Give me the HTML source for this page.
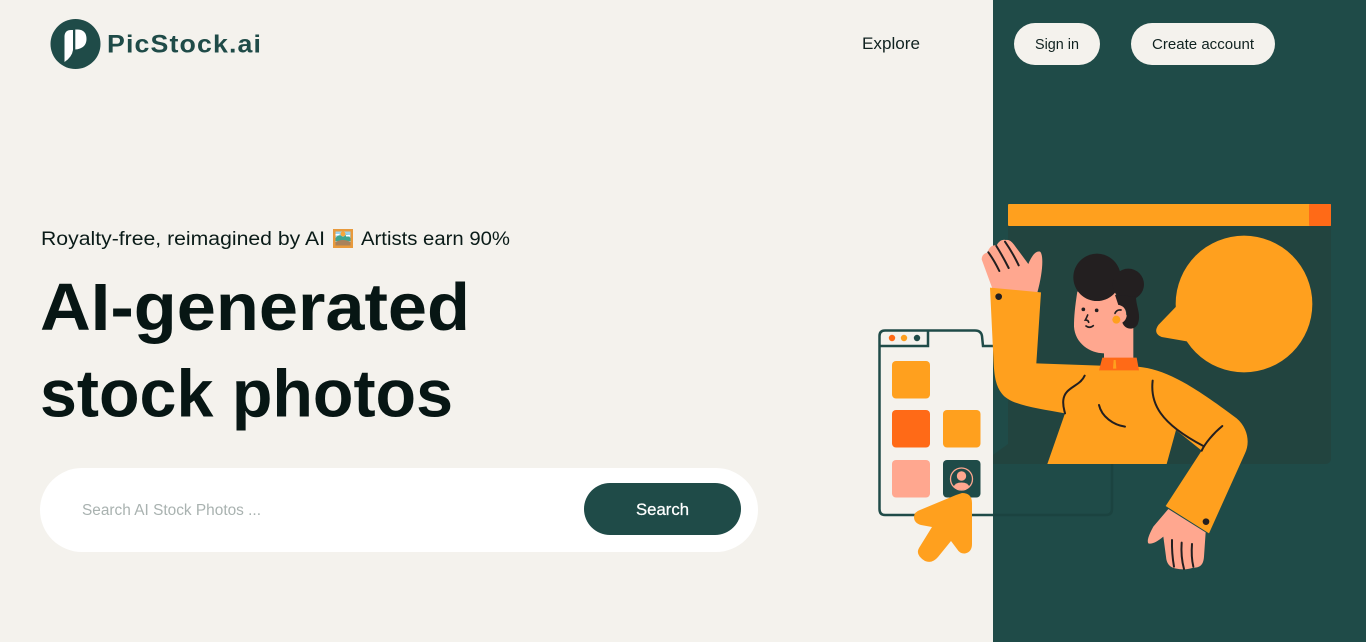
<!DOCTYPE html>
<html lang="en">
<head>
<meta charset="utf-8">
<title>PicStock.ai</title>
<style>
html,body{margin:0;padding:0;width:1366px;height:642px;overflow:hidden;background:#F4F2ED}
svg{display:block}
text{font-family:"Liberation Sans",Arial,sans-serif}
</style>
</head>
<body>
<svg width="1366" height="642" viewBox="0 0 1366 642" xmlns="http://www.w3.org/2000/svg">
<rect width="1366" height="642" fill="#F4F2ED"/>
<rect x="993" width="373" height="642" fill="#1F4B48"/>

<!-- logo -->
<circle cx="75.500" cy="44" r="25" fill="#1F4B48"/>
<path d="M64.500 36 Q65 30 71 30 L73 30 L73 50 Q72 57 64.500 62 Z M75.300 29.500 L78 29.500 Q86.500 30 86.500 39 Q86.500 46 80 48.500 Q77.500 49.500 75.300 49.500 Z" fill="#fff"/>
<g transform="translate(107 52.700) scale(1.07 1)">
<text x="0" y="0" font-size="25" font-weight="700" fill="#1F4B48" textLength="143.900" lengthAdjust="spacing">PicStock.ai</text>
</g>

<!-- nav -->
<text x="862" y="49" font-size="16.500" fill="#102220" textLength="58" lengthAdjust="spacingAndGlyphs">Explore</text>
<rect x="1014" y="23" width="86" height="42" rx="21" fill="#F4F2ED"/>
<text x="1035" y="49" font-size="15" fill="#102220" textLength="44" lengthAdjust="spacingAndGlyphs">Sign in</text>
<rect x="1131" y="23" width="144" height="42" rx="21" fill="#F4F2ED"/>
<text x="1152" y="49" font-size="15" fill="#102220" textLength="102" lengthAdjust="spacingAndGlyphs">Create account</text>

<!-- hero text -->
<text x="41" y="245" font-size="19" fill="#0A1B18" textLength="284" lengthAdjust="spacingAndGlyphs">Royalty-free, reimagined by AI</text>
<g>
<rect x="333" y="229" width="20" height="19" fill="#E89A3C"/>
<rect x="335.500" y="231.500" width="15" height="14" fill="#9CD3EE"/>
<circle cx="343" cy="234" r="2.500" fill="#F7A63A"/>
<path d="M335.500 238 L339 234.500 L343 237 L347 234.500 L350.500 238 V241 H335.500Z" fill="#3FA58E"/>
<path d="M335.500 234 h4 v1.500 h-4z M346 235 h4 v1.500 h-4z" fill="#fff"/>
<path d="M335.500 245.500 V242 Q343 238 350.500 242 V245.500Z" fill="#A9825A"/>
</g>
<text x="361" y="245" font-size="19" fill="#0A1B18" textLength="149" lengthAdjust="spacingAndGlyphs">Artists earn 90%</text>
<text x="40" y="330" font-size="67" font-weight="700" fill="#071614" textLength="430" lengthAdjust="spacingAndGlyphs">AI-generated</text>
<text x="40" y="416.500" font-size="67" font-weight="700" fill="#071614" textLength="413" lengthAdjust="spacingAndGlyphs">stock photos</text>

<!-- search -->
<rect x="40" y="468" width="718" height="84" rx="42" fill="#fff"/>
<text x="82" y="515" font-size="15.500" fill="#A9B2B0" textLength="179" lengthAdjust="spacingAndGlyphs">Search AI Stock Photos ...</text>
<rect x="584" y="483" width="157" height="52" rx="26" fill="#1F4B48"/>
<text x="636" y="515" font-size="17" fill="#fff" stroke="#fff" stroke-width=".25" textLength="53" lengthAdjust="spacingAndGlyphs">Search</text>

<!-- browser panel -->
<rect x="1008" y="204" width="323" height="22" rx="1" fill="#FFA01E"/>
<rect x="1309" y="204" width="22" height="22" rx="1" fill="#FF6A17"/>
<path d="M1008 226 H1331 V458 Q1331 464 1325 464 H993 V455 L1008 444 Z" fill="#22443F"/>

<!-- small window -->
<path d="M993 330 H885 Q879 330 879 336 V509 Q879 515 885 515 H993 Z" fill="#F4F2ED"/>
<path d="M993 515 H885 Q879.500 515 879.500 509 V336 Q879.500 330.500 885 330.500 H975 Q981 330.500 982 336 L983 346 H993" fill="none" stroke="#1F4B48" stroke-width="2.500"/>
<path d="M993 515 H1106 Q1112 515 1112 509 V464" fill="none" stroke="#1B4340" stroke-width="2.500"/>
<path d="M880 346 H928 V331" fill="none" stroke="#1F4B48" stroke-width="2.500"/>
<circle cx="892" cy="338" r="3.200" fill="#FF6A17"/>
<circle cx="904" cy="338" r="3.200" fill="#FFA01E"/>
<circle cx="917" cy="338" r="3.200" fill="#1F4B48"/>
<rect x="892" y="361" width="38" height="37.500" rx="4" fill="#FFA01E"/>
<rect x="892" y="410" width="38" height="37.500" rx="4" fill="#FF6A17"/>
<rect x="943" y="410" width="37.500" height="37.500" rx="4" fill="#FFA01E"/>
<rect x="892" y="460" width="38" height="37.500" rx="4" fill="#FFA78F"/>
<rect x="943" y="460" width="37.500" height="37.500" rx="4" fill="#1F4B48"/>
<circle cx="961.500" cy="479" r="11" fill="none" stroke="#FFA78F" stroke-width="1.300"/>
<circle cx="961.500" cy="476" r="4.700" fill="#FFA78F"/>
<path d="M953.500 487 Q955 482.500 961.500 482.500 Q968 482.500 969.500 487 Q966 489.500 961.500 489.500 Q957 489.500 953.500 487Z" fill="#FFA78F"/>

<!-- arrow -->
<path d="M962 493 Q972 493 972 503 L972 544 Q972 552 965 553.500 Q960 554 957 549 L951 541 L938 557 Q932 564 925 561 Q915 555 919 548 L932 527 L921 525 Q914 523 914 517 Q914 512 920 510 L956 495 Z" fill="#FFA01E"/>

<!-- figure: coordinates in 3x zoom space -->
<g transform="translate(870 190) scale(.33333)">
<path d="M920 348 L865 405 Q848 430 875 441 L955 455 L1000 420 Z" fill="#FFA01E"/>
<circle cx="1122" cy="342" r="205" fill="#FFA01E"/>

<!-- left hand -->
<path d="M368 298 L335 208 Q335 192 352 188 Q360 163 380 166 Q390 146 408 150 Q420 148 432 164 L475 222 C482 205 495 180 510 185 C522 195 518 250 502 308 Z" fill="#FFA78F"/>
<g fill="none" stroke="#231F20" stroke-width="6" stroke-linecap="round">
<path d="M355 187 Q372 210 388 243"/>
<path d="M379 168 Q398 198 416 234"/>
<path d="M405 155 Q428 188 446 226"/>
</g>

<!-- head -->
<path d="M622 305 C615 350 612 380 612 410 C615 460 660 490 702 490 L702 510 L790 510 L790 405 L745 340 L735 305 Z" fill="#FFA78F"/>
<circle cx="681" cy="262" r="71" fill="#231F20"/>
<circle cx="775" cy="283" r="47" fill="#231F20"/>
<path d="M735 315 L798 320 C798 350 815 375 803 403 C792 422 765 420 757 398 C778 385 775 350 745 345 Z" fill="#231F20"/>
<path d="M745 345 C772 348 775 382 757 396 L735 400 L730 350 Z" fill="#FFA78F"/>
<circle cx="640" cy="358" r="5.500" fill="#231F20"/>
<circle cx="680" cy="361" r="5.500" fill="#231F20"/>
<g fill="none" stroke="#231F20" stroke-width="5" stroke-linecap="round">
<path d="M653 375 Q649 385 646 390 Q655 390 656 397"/>
<path d="M648 408 Q660 416 670 407"/>
<path d="M735 370 Q740 358 753 360"/>
</g>
<circle cx="739" cy="389" r="12" fill="#FFA01E"/>

<!-- body -->
<path d="M360 293 L513 307 L499 520 L690 527 L800 530 C880 535 960 580 1100 685 C1135 715 1140 760 1125 790 L1017 1030 L887 948 L995 782 L918 720 L890 822 L532 822 L585 670 C500 655 420 645 395 610 C375 585 372 550 370 500 Z" fill="#FFA01E"/>
<path d="M697 503 L800 503 L807 541 L687 541 Z" fill="#FF6A17"/>
<path d="M731 510 L737 510 L739 536 L729 536 Z" fill="#FFA01E"/>
<circle cx="386" cy="320" r="10" fill="#231F20"/>
<circle cx="1008" cy="995" r="10" fill="#231F20"/>
<g fill="none" stroke="#231F20" stroke-width="6" stroke-linecap="round">
<path d="M644 557 C630 590 585 590 580 630 C578 650 583 660 585 670"/>
<path d="M687 645 C695 680 730 705 765 710"/>
<path d="M848 572 C840 640 870 700 1000 768"/>
<path d="M1057 708 C1030 730 1005 760 995 782"/>
</g>

<!-- right hand -->
<path d="M895 957 L1007 1027 L1002 1100 C1000 1130 985 1133 970 1133 Q945 1142 915 1135 Q890 1130 888 1100 L880 1040 Q850 1065 835 1060 Q828 1050 850 1010 Z" fill="#FFA78F"/>
<g fill="none" stroke="#231F20" stroke-width="6" stroke-linecap="round">
<path d="M906 1050 Q905 1090 912 1130"/>
<path d="M935 1058 Q932 1100 942 1137"/>
<path d="M966 1062 Q963 1100 970 1130"/>
</g>
</g>
</svg>
</body>
</html>
